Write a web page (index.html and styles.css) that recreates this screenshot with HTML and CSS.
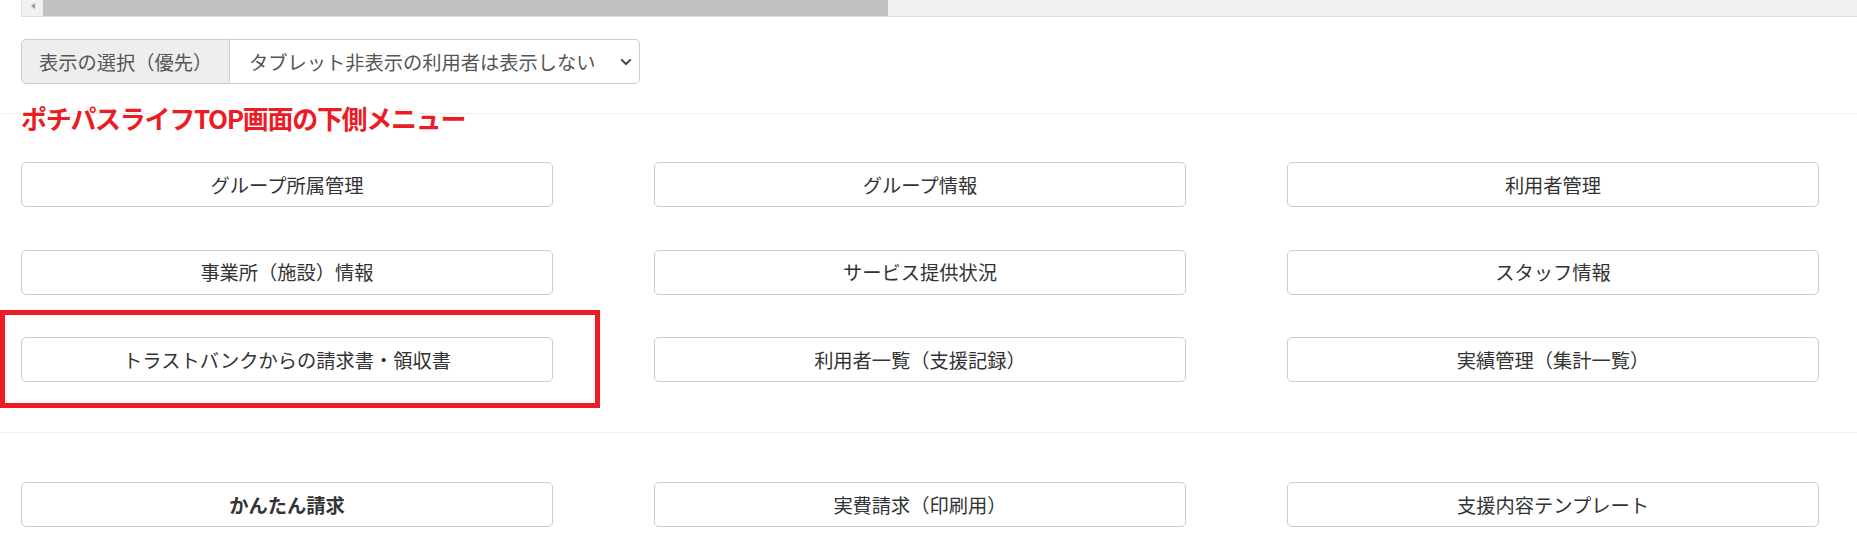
FILE: index.html
```html
<!DOCTYPE html>
<html lang="ja">
<head>
<meta charset="utf-8">
<title>メニュー</title>
<link rel="stylesheet" href="styles.css">
</head>
<body>
<div class="page">
  <div class="hscroll">
    <div class="scroll-arrow"><span class="tri"></span></div>
    <div class="scroll-thumb"></div>
  </div>

  <div class="input-group">
    <div class="addon">表示の選択（優先）</div>
    <div class="select">
      <span>タブレット非表示の利用者は表示しない</span>
      <svg class="chev" width="12" height="8" viewBox="0 0 12 8"><path d="M1.2 1.4 L6 6 L10.8 1.4" fill="none" stroke="#444" stroke-width="2"/></svg>
    </div>
  </div>

  <div class="divider first"></div>

  <div class="note-title">ポチパスライフTOP画面の下側メニュー</div>

  <div class="menu">
    <div class="btn">グループ所属管理</div>
    <div class="btn">グループ情報</div>
    <div class="btn">利用者管理</div>
    <div class="btn">事業所（施設）情報</div>
    <div class="btn">サービス提供状況</div>
    <div class="btn">スタッフ情報</div>
    <div class="btn">トラストバンクからの請求書・領収書</div>
    <div class="btn">利用者一覧（支援記録）</div>
    <div class="btn">実績管理（集計一覧）</div>
  </div>

  <div class="divider second"></div>

  <div class="menu lower">
    <div class="btn strong">かんたん請求</div>
    <div class="btn">実費請求（印刷用）</div>
    <div class="btn">支援内容テンプレート</div>
  </div>

  <div class="note-box"></div>
</div>
</body>
</html>
```

FILE: styles.css
```css
html, body {
  margin: 0;
  padding: 0;
  background: #fff;
}

body {
  font-family: "Noto Sans CJK JP", "Noto Sans", sans-serif;
  color: #333;
  font-size: 19.25px;
}

.page {
  position: relative;
  width: 1857px;
  height: 554px;
  overflow: hidden;
}

/* horizontal scrollbar of the table wrapper */
.hscroll {
  margin-left: 21px;
  height: 16px;
  background: #f1f1f1;
  border-left: 1px solid #dcdcdc;
  border-bottom: 1px solid #dcdcdc;
  display: flex;
}

.scroll-arrow {
  width: 21px;
  display: flex;
  justify-content: center;
  padding-top: 3px;
  box-sizing: border-box;
}

.tri {
  width: 0;
  height: 0;
  border-top: 3px solid transparent;
  border-bottom: 3px solid transparent;
  border-right: 4px solid #9a9a9a;
}

.scroll-thumb {
  width: 845px;
  background: #c1c1c1;
}

/* input group */
.input-group {
  display: flex;
  margin: 22px 0 0 21px;
  width: 619px;
  height: 45px;
  color: #555;
}

.addon {
  width: 209px;
  box-sizing: border-box;
  background: #eee;
  border: 1px solid #ccc;
  border-radius: 5px 0 0 5px;
  display: flex;
  align-items: center;
  padding-left: 17px;
  white-space: nowrap;
}

.select {
  flex: 1;
  box-sizing: border-box;
  border: 1px solid #ccc;
  border-left: 0;
  border-radius: 0 5px 5px 0;
  display: flex;
  align-items: center;
  justify-content: space-between;
  padding: 0 7px 0 19px;
  white-space: nowrap;
}

.chev {
  display: block;
}

.divider {
  border-top: 1px solid #eee;
}

.divider.first {
  margin-top: 29px;
}

.divider.second {
  margin-top: 50px;
}

/* annotation overlays */
.note-title {
  position: absolute;
  top: 105px;
  left: 21px;
  font-size: 26px;
  line-height: 1;
  font-weight: 700;
  letter-spacing: -1.3px;
  color: #ec1c24;
  white-space: nowrap;
}

.note-box {
  position: absolute;
  top: 310px;
  left: 0;
  width: 600px;
  height: 98px;
  box-sizing: border-box;
  border: 5px solid #ec1c24;
}

/* menu buttons */
.menu {
  display: grid;
  grid-template-columns: repeat(3, 532px);
  column-gap: 101px;
  row-gap: 42.5px;
  margin: 48px 0 0 21px;
}

.menu.lower {
  margin-top: 49px;
}

.btn {
  height: 45px;
  box-sizing: border-box;
  border: 1px solid #ccc;
  border-radius: 5px;
  background: #fff;
  display: flex;
  align-items: center;
  justify-content: center;
  color: #333;
  white-space: nowrap;
}

.btn.strong {
  font-weight: 700;
}
```
